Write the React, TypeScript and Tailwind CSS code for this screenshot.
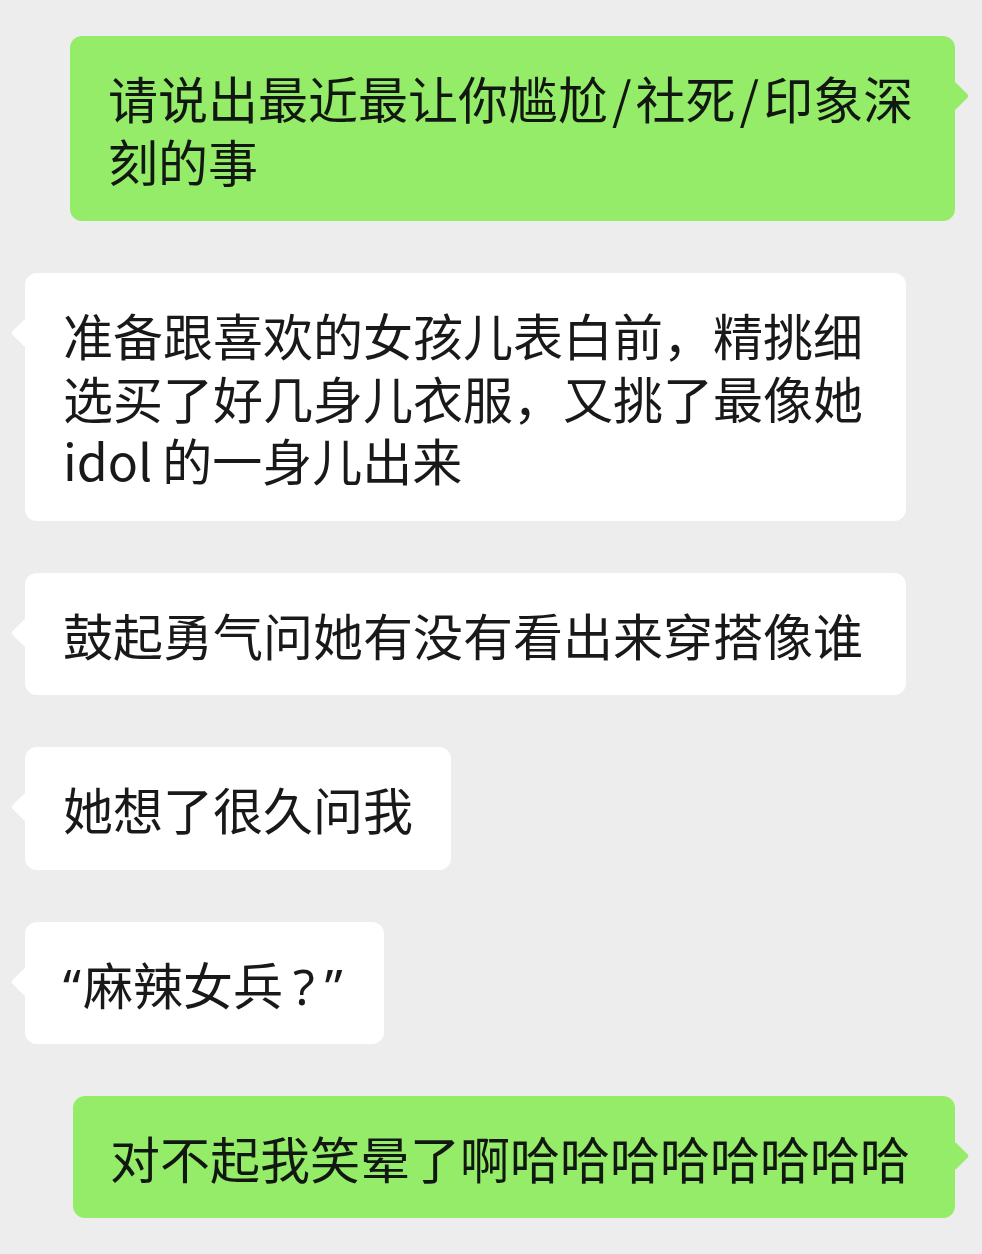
import React from 'react';

type Side = 'left' | 'right';

const Bubble: React.FC<{ side: Side; className?: string; children: React.ReactNode }> = ({ side, className = '', children }) => {
  const isMe = side === 'right';
  return (
    <div className={isMe ? 'flex justify-end pr-[27px]' : 'flex justify-start pl-[25px]'}>
      <div
        className={`relative rounded-[12px] py-[30px] text-[50px] leading-[62.5px] whitespace-nowrap ${
          isMe ? 'bg-[#95ec69] text-[#111811]' : 'bg-white text-[#191919]'
        } ${className}`}
      >
        <span
          className={`absolute top-[50px] w-[20px] h-[20px] rotate-45 rounded-[2px] ${
            isMe ? 'right-[-10px] bg-[#95ec69]' : 'left-[-10px] bg-white'
          }`}
        />
        <div className="relative">{children}</div>
      </div>
    </div>
  );
};

// latin punctuation set in a latin face so it stays half-width
const Latin: React.FC<{ className?: string; children: React.ReactNode }> = ({ className = '', children }) => (
  <span className={`leading-none ${className}`} style={{ fontFamily: '"Noto Sans", sans-serif' }}>
    {children}
  </span>
);

export default function App() {
  return (
    <div
      className="min-h-screen bg-[#ededed] pt-[36px] pb-[37px] flex flex-col gap-[52px]"
      style={{ fontFamily: '"Noto Sans CJK SC", "Noto Sans", sans-serif' }}
    >
      <Bubble side="right" className="w-[885px] pl-[38px] pr-[40px]">
        请说出最近最让你尴尬<span className="mx-[4px]">/</span>社死<span className="mx-[4px]">/</span>印象深
        <br />
        刻的事
      </Bubble>

      <Bubble side="left" className="w-[881px] px-[38px]">
        准备跟喜欢的女孩儿表白前，精挑细
        <br />
        选买了好几身儿衣服，又挑了最像她
        <br />
        <span className="mr-[10px]">idol</span>的一身儿出来
      </Bubble>

      <Bubble side="left" className="w-[881px] px-[38px]">
        鼓起勇气问她有没有看出来穿搭像谁
      </Bubble>

      <Bubble side="left" className="px-[38px]">
        她想了很久问我
      </Bubble>

      <Bubble side="left" className="w-[359px] h-[122px] pl-[38px] pr-[30px]">
        <Latin className="mr-[2px]">“</Latin>麻辣女兵<Latin className="ml-[10px] mr-[10px]">?</Latin>
        <Latin>”</Latin>
      </Bubble>

      <Bubble side="right" className="w-[882px] pl-[37px] pr-[41px]">
        对不起我笑晕了啊哈哈哈哈哈哈哈哈
      </Bubble>
    </div>
  );
}
